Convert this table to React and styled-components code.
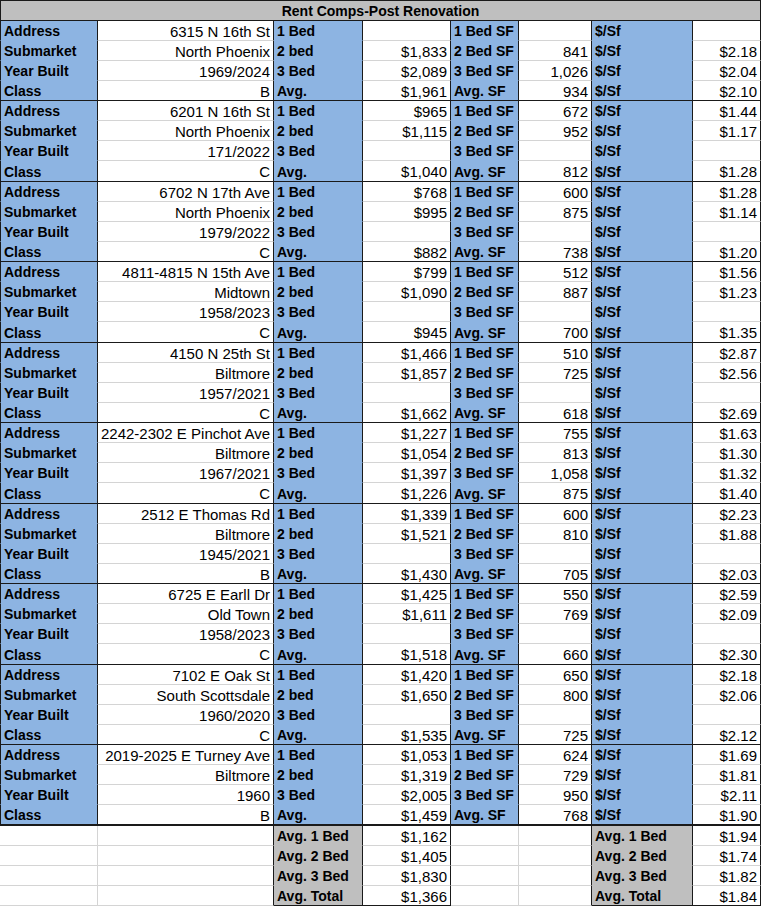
import styled, { createGlobalStyle } from 'styled-components'

const GlobalStyle = createGlobalStyle`
  html, body {
    margin: 0;
    padding: 0;
    background: #FFFFFF;
  }
  body {
    font-family: "Liberation Sans", Arial, sans-serif;
    color: #000000;
  }
`

const BLUE = '#8DB4E2'
const GRAY = '#BFBFBF'
const GRID = '#D4D4D4'
const DARK = '#1A1A1A'

const Sheet = styled.div`
  width: 761px;
  display: flex;
  flex-direction: column;
`

const TitleBar = styled.div`
  height: 21px;
  box-sizing: border-box;
  width: 761px;
  background: ${GRAY};
  border: 1px solid ${DARK};
  display: flex;
  align-items: center;
  justify-content: center;
  font-weight: bold;
  font-size: 14px;
`

const Row = styled.div`
  display: grid;
  grid-template-columns: 98px 176px 89px 88px 68px 73px 101px 68px;
  height: ${p => p.$h}px;
`

const Cell = styled.div`
  box-sizing: border-box;
  height: 100%;
  display: flex;
  align-items: center;
  padding: 1px 3px 0 3px;
  white-space: nowrap;
  overflow: hidden;
  background: ${p => p.$fill || '#FFFFFF'};
  justify-content: ${p => (p.$right ? 'flex-end' : 'flex-start')};
  font-size: ${p => (p.$bold ? '14px' : '15px')};
  font-weight: ${p => (p.$bold ? 'bold' : 'normal')};
  border-right: 1px solid ${p => p.$rb || DARK};
  border-bottom: ${p => p.$bw || 1}px solid ${p => p.$bb || GRID};
  border-left: ${p => (p.$lb ? `1px solid ${DARK}` : 'none')};
`

const comps = [
  ['6315 N 16th St', 'North Phoenix', '1969/2024', 'B', ['', '$1,833', '$2,089', '$1,961'], ['', '841', '1,026', '934'], ['', '$2.18', '$2.04', '$2.10']],
  ['6201 N 16th St', 'North Phoenix', '171/2022', 'C', ['$965', '$1,115', '', '$1,040'], ['672', '952', '', '812'], ['$1.44', '$1.17', '', '$1.28']],
  ['6702 N 17th Ave', 'North Phoenix', '1979/2022', 'C', ['$768', '$995', '', '$882'], ['600', '875', '', '738'], ['$1.28', '$1.14', '', '$1.20']],
  ['4811-4815 N 15th Ave', 'Midtown', '1958/2023', 'C', ['$799', '$1,090', '', '$945'], ['512', '887', '', '700'], ['$1.56', '$1.23', '', '$1.35']],
  ['4150 N 25th St', 'Biltmore', '1957/2021', 'C', ['$1,466', '$1,857', '', '$1,662'], ['510', '725', '', '618'], ['$2.87', '$2.56', '', '$2.69']],
  ['2242-2302 E Pinchot Ave', 'Biltmore', '1967/2021', 'C', ['$1,227', '$1,054', '$1,397', '$1,226'], ['755', '813', '1,058', '875'], ['$1.63', '$1.30', '$1.32', '$1.40']],
  ['2512 E Thomas Rd', 'Biltmore', '1945/2021', 'B', ['$1,339', '$1,521', '', '$1,430'], ['600', '810', '', '705'], ['$2.23', '$1.88', '', '$2.03']],
  ['6725 E Earll Dr', 'Old Town', '1958/2023', 'C', ['$1,425', '$1,611', '', '$1,518'], ['550', '769', '', '660'], ['$2.59', '$2.09', '', '$2.30']],
  ['7102 E Oak St', 'South Scottsdale', '1960/2020', 'C', ['$1,420', '$1,650', '', '$1,535'], ['650', '800', '', '725'], ['$2.18', '$2.06', '', '$2.12']],
  ['2019-2025 E Turney Ave', 'Biltmore', '1960', 'B', ['$1,053', '$1,319', '$2,005', '$1,459'], ['624', '729', '950', '768'], ['$1.69', '$1.81', '$2.11', '$1.90']],
]

const infoLabels = ['Address', 'Submarket', 'Year Built', 'Class']
const bedLabels = ['1 Bed', '2 bed', '3 Bed', 'Avg.']
const sfLabels = ['1 Bed SF', '2 Bed SF', '3 Bed SF', 'Avg. SF']

const summary = [
  ['Avg. 1 Bed', '$1,162', '$1.94'],
  ['Avg. 2 Bed', '$1,405', '$1.74'],
  ['Avg. 3 Bed', '$1,830', '$1.82'],
  ['Avg. Total', '$1,366', '$1.84'],
]

function CompGroup({ comp, index, last }) {
  const [address, submarket, year, cls, rents, sizes, perSf] = comp
  const info = [address, submarket, year, cls]
  return (
    <>
      {infoLabels.map((label, r) => {
        const end = r === 3
        const h = end && (index % 2 === 1 || last) ? 21 : 20
        const bw = end && last ? 2 : 1
        const line = end ? DARK : GRID
        const blueLine = end ? DARK : BLUE
        return (
          <Row key={label} $h={end && last ? 21 : h}>
            <Cell $lb $bold $fill={BLUE} $bb={blueLine} $bw={bw}>{label}</Cell>
            <Cell $right $bb={line} $bw={bw}>{info[r]}</Cell>
            <Cell $bold $fill={BLUE} $bb={blueLine} $bw={bw}>{bedLabels[r]}</Cell>
            <Cell $right $bb={line} $bw={bw}>{rents[r]}</Cell>
            <Cell $bold $fill={BLUE} $bb={blueLine} $bw={bw}>{sfLabels[r]}</Cell>
            <Cell $right $bb={line} $bw={bw}>{sizes[r]}</Cell>
            <Cell $bold $fill={BLUE} $bb={blueLine} $bw={bw}>$/Sf</Cell>
            <Cell $right $bb={line} $bw={bw}>{perSf[r]}</Cell>
          </Row>
        )
      })}
    </>
  )
}

export default function App() {
  return (
    <>
      <GlobalStyle />
      <Sheet>
        <TitleBar>Rent Comps-Post Renovation</TitleBar>
        {comps.map((comp, i) => (
          <CompGroup key={comp[0]} comp={comp} index={i} last={i === comps.length - 1} />
        ))}
        {summary.map(([label, rent, psf], r) => {
          const end = r === summary.length - 1
          const gray = end ? DARK : GRAY
          const edge = end ? DARK : GRID
          return (
            <Row key={label} $h={20}>
              <Cell $rb={GRID} />
              <Cell />
              <Cell $bold $fill={GRAY} $bb={gray}>{label}</Cell>
              <Cell $right $bb={edge}>{rent}</Cell>
              <Cell $rb={GRID} />
              <Cell />
              <Cell $bold $fill={GRAY} $bb={gray}>{label}</Cell>
              <Cell $right $bb={edge}>{psf}</Cell>
            </Row>
          )
        })}
      </Sheet>
    </>
  )
}
